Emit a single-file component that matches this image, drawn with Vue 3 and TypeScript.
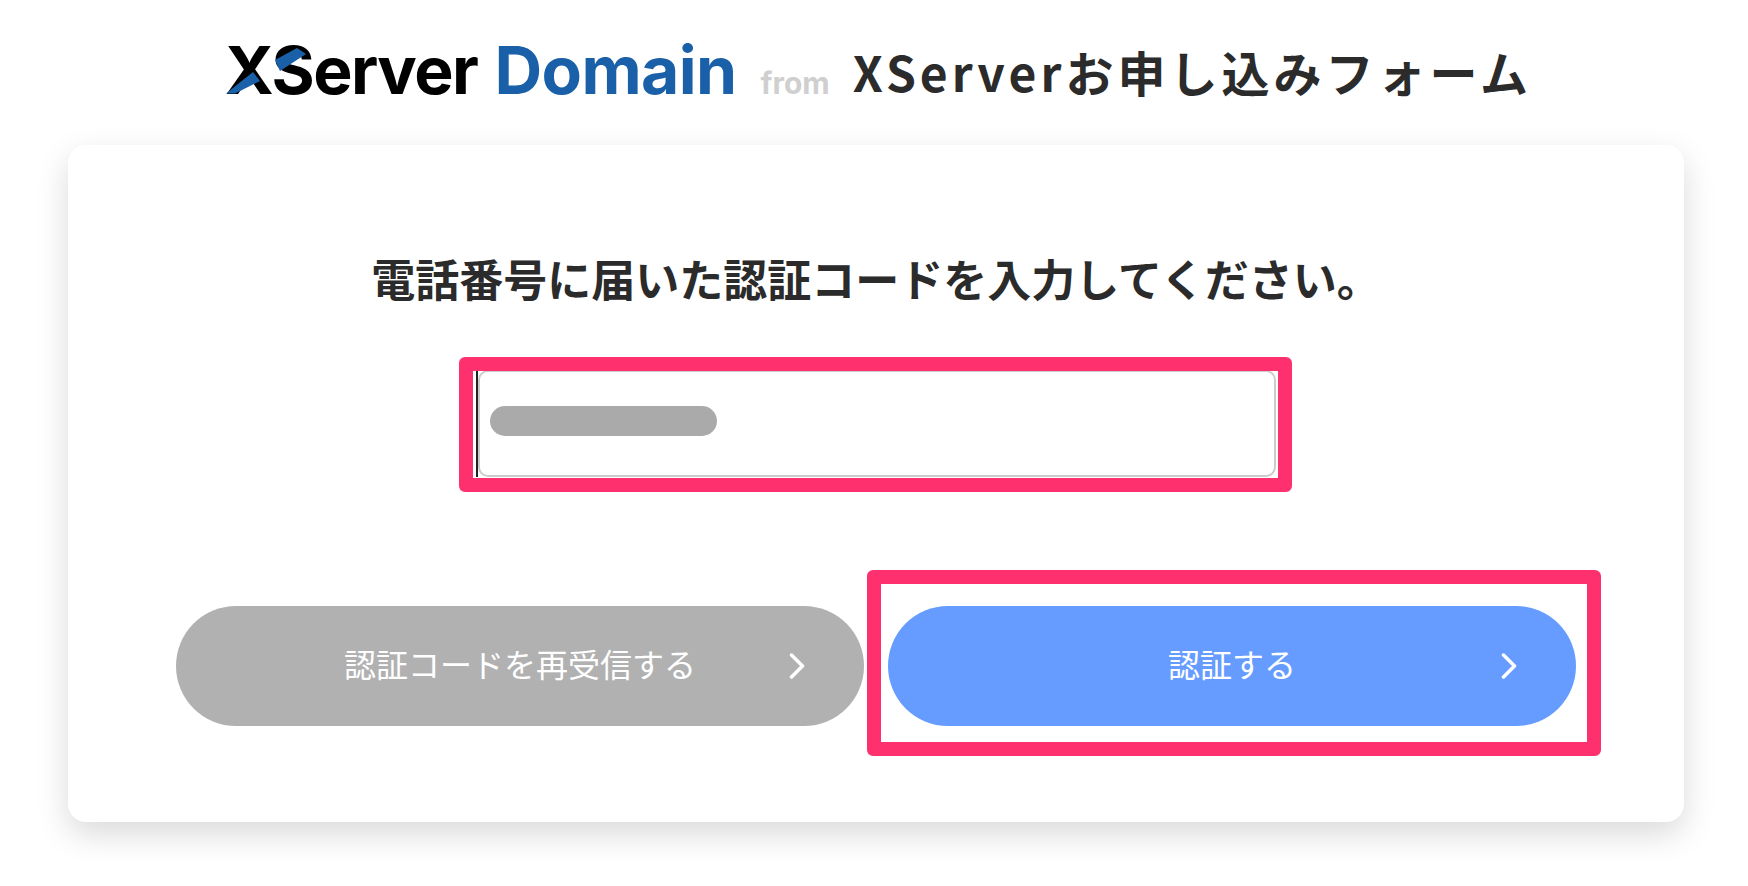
<script setup lang="ts">
const title = 'XServerお申し込みフォーム';
</script>

<template>
  <div class="page">
    <header class="head">
      <div class="logo">
        <span class="logo-x">XServer<svg class="logo-mark" viewBox="0 0 100 60" aria-hidden="true">
          <path d="M6 53.5 L15 53.5 L40 41 L33 32 Z" fill="#1a60a8" />
          <path d="M55 20 L77 8 L86 14 L60 31 Z" fill="#1a60a8" />
        </svg></span>
        <span class="logo-d">Domain</span>
      </div>
      <span class="from">from</span>
      <h1 class="title">{{ title }}</h1>
    </header>

    <main class="card">
      <h2 class="lead">電話番号に届いた認証コードを入力してください。</h2>

      <div class="field">
        <div class="input">
          <span class="caret"></span>
          <span class="mask"></span>
        </div>
        <span class="mark mark-input"></span>
      </div>

      <div class="actions">
        <button class="btn btn-gray" type="button">
          認証コードを再受信する
          <svg class="chev" viewBox="0 0 16 26"><path d="M2.5 2 L13.5 13 L2.5 24" /></svg>
        </button>
        <div class="btn-wrap">
          <button class="btn btn-blue" type="button">
            認証する
            <svg class="chev" viewBox="0 0 16 26"><path d="M2.5 2 L13.5 13 L2.5 24" /></svg>
          </button>
          <span class="mark mark-btn"></span>
        </div>
      </div>
    </main>
  </div>
</template>

<style>
html, body {
  background: #fff;
  overflow: hidden;
}
</style>

<style scoped>
.page {
  width: 1748px;
  height: 886px;
  padding: 0 64px 0 68px;
  box-sizing: border-box;
  font-family: "Noto Sans CJK JP", "Noto Sans", sans-serif;
  color: #2b2b2b;
}

/* ---------- header ---------- */
.head {
  height: 145px;
  display: flex;
  align-items: flex-start;
  padding: 37px 0 0 157px;
  box-sizing: border-box;
}
.logo {
  display: flex;
  gap: 17px;
  font-family: Inter, sans-serif;
  font-weight: 700;
  font-size: 66px;
  line-height: 1;
}
.logo-x {
  position: relative;
  color: #000;
  letter-spacing: -1.5px;
}
.logo-mark {
  position: absolute;
  left: -5px;
  top: 3px;
  width: 100px;
  height: 60px;
}
.logo-d {
  color: #1a60a8;
  letter-spacing: -.6px;
}
.from {
  margin: 28px 23px 0 24px;
  font-family: Inter, sans-serif;
  font-weight: 700;
  font-size: 30px;
  line-height: 36px;
  color: #cfcfcf;
}
.title {
  margin: -1px 0 0;
  font-size: 48px;
  line-height: 70px;
  font-weight: 700;
  letter-spacing: 4px;
  white-space: nowrap;
}

/* ---------- card ---------- */
.card {
  width: 1616px;
  height: 677px;
  padding: 0 108px;
  box-sizing: border-box;
  background: #fff;
  border-radius: 18px;
  box-shadow: 0 12px 32px rgba(0, 0, 0, .15);
  display: flex;
  flex-direction: column;
  align-items: center;
}
.lead {
  margin: 100px 0 0;
  font-size: 44px;
  line-height: 66px;
  font-weight: 700;
  white-space: nowrap;
}
.field {
  position: relative;
  margin: 59px 0 0 2px;
}
.input {
  position: relative;
  width: 798px;
  height: 107px;
  box-sizing: border-box;
  padding: 0 0 5px 10px;
  border: 2px solid #ccc;
  border-radius: 10px;
  display: flex;
  align-items: center;
}
.caret {
  position: absolute;
  left: -4px;
  top: -2px;
  bottom: -2px;
  width: 2px;
  background: #222;
}
.mask {
  width: 227px;
  height: 30px;
  border-radius: 15px;
  background: #aaa;
}

/* ---------- buttons ---------- */
.actions {
  margin-top: 129px;
  width: 100%;
  display: flex;
  gap: 24px;
}
.btn-wrap {
  position: relative;
  flex: 1;
  display: flex;
}
.btn {
  position: relative;
  flex: 1;
  height: 120px;
  padding: 0 0 6px;
  border: 0;
  border-radius: 60px;
  font-family: inherit;
  font-size: 32px;
  color: #fff;
}
.btn-gray { background: #b1b1b1; }
.btn-blue { background: #669cff; }
.chev {
  position: absolute;
  right: 59px;
  top: 47px;
  width: 16px;
  height: 26px;
  fill: none;
  stroke: #fff;
  stroke-width: 3.5;
  stroke-linecap: round;
  stroke-linejoin: round;
}

/* ---------- pink annotation frames ---------- */
.mark {
  position: absolute;
  border: 14px solid #ff306e;
  border-radius: 6px;
  pointer-events: none;
}
.mark-input {
  inset: -13px -16px -15px -19px;
}
.mark-btn {
  inset: -36px -25px -30px -21px;
}
</style>
